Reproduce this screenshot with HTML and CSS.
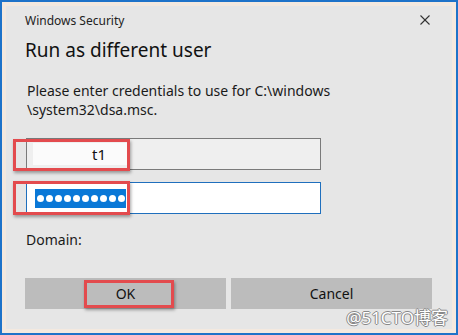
FILE: index.html
```html
<!DOCTYPE html>
<html lang="en">
<head>
    <meta charset="UTF-8">
    <title>Windows Security</title>
    <link rel="stylesheet" href="styles.css">
</head>
<body>
    <div class="window">
        <div class="inner">
            <div class="titlebar">
                <span class="caption">Windows Security</span>
                <svg class="close" width="10" height="10" viewBox="0 0 10 10">
                    <line x1="0.5" y1="0.5" x2="9.5" y2="9.5" stroke="#333" stroke-width="1.1"></line>
                    <line x1="9.5" y1="0.5" x2="0.5" y2="9.5" stroke="#333" stroke-width="1.1"></line>
                </svg>
            </div>

            <h1 class="heading">Run as different user</h1>
            <p class="message">Please enter credentials to use for C:\windows<br>\system32\dsa.msc.</p>

            <div class="field field-user">
                <div class="redact">t1</div>
                <span class="mark mark-user"></span>
            </div>
            <div class="field field-pass">
                <div class="selection">
                    <i></i><i></i><i></i><i></i><i></i><i></i><i></i><i></i><i></i><i></i>
                </div>
                <span class="mark mark-pass"></span>
            </div>

            <div class="domain">Domain:</div>

            <div class="buttons">
                <button class="btn">OK<span class="mark mark-ok"></span></button>
                <button class="btn">Cancel</button>
            </div>

            <div class="watermark">@51CTO博客</div>
        </div>
    </div>
</body>
</html>
```

FILE: styles.css
```css
body {
    margin: 0;
    padding: 0;
    font-family: 'Noto Sans', 'Liberation Sans', 'Noto Sans CJK SC', sans-serif;
    color: #1a1a1a;
}

.window {
    width: 458px;
    height: 335px;
    box-sizing: border-box;
    border: 2px solid #1f73c9;
    background: #f4e9df;
    padding: 4px;
}

.inner {
    position: relative;
    height: 100%;
    box-sizing: border-box;
    background: #e6e6e6;
    padding: 0 20px 0 19px;
}

.titlebar {
    display: flex;
    justify-content: space-between;
    align-items: center;
    height: 26px;
    padding-top: 1px;
}

.caption {
    font-size: 12px;
    color: #222;
}

.close {
    margin-right: 2px;
}

.heading {
    margin: 3px 0 0 0;
    font-size: 19px;
    font-weight: normal;
    line-height: 28px;
    color: #111;
}

.message {
    margin: 17px 0 0 2px;
    font-size: 14px;
    line-height: 19px;
    color: #1a1a1a;
}

.field {
    position: relative;
    width: 295px;
    height: 32px;
    box-sizing: border-box;
    margin-left: 1px;
}

.field-user {
    margin-top: 19px;
    border: 1px solid #7a7a7a;
    background: #efefef;
    padding: 4px 0 0 6px;
}

.field-pass {
    margin-top: 12px;
    border: 1px solid #1f6fbd;
    background: #fff;
    padding: 6px 0 0 8px;
}

.redact {
    width: 95px;
    height: 22px;
    background: #fbfbfb;
    font-size: 15px;
    line-height: 22px;
    padding-left: 59px;
    box-sizing: border-box;
    color: #111;
}

.selection {
    display: flex;
    align-items: center;
    gap: 2px;
    width: 91px;
    height: 19px;
    box-sizing: border-box;
    padding-left: 2px;
    background: #0a78d7;
}

.selection i {
    width: 7px;
    height: 7px;
    border-radius: 50%;
    background: #fff;
}

.mark {
    position: absolute;
    border: 3px solid #e34b4e;
    box-sizing: border-box;
    box-shadow: 1px 2px 3px rgba(0, 0, 0, 0.35);
}

.mark-user {
    left: -14px;
    top: 0;
    width: 117px;
    height: 32px;
}

.mark-pass {
    left: -14px;
    top: -2px;
    width: 117px;
    height: 34px;
}

.domain {
    margin: 16px 0 0 1px;
    font-size: 14px;
    line-height: 19px;
}

.buttons {
    display: flex;
    gap: 5px;
    margin-top: 29px;
}

.btn {
    position: relative;
    width: 201px;
    height: 31px;
    border: none;
    background: #bcbcbc;
    font-family: inherit;
    font-size: 14px;
    color: #111;
    padding: 0;
}

.mark-ok {
    left: 59px;
    top: 2px;
    width: 90px;
    height: 28px;
}

.watermark {
    position: absolute;
    right: 4px;
    bottom: 0;
    font-size: 17px;
    color: #fff;
    text-shadow: -1px 0 #888, 1px 0 #888, 0 -1px #888, 0 1px #888;
}
```
